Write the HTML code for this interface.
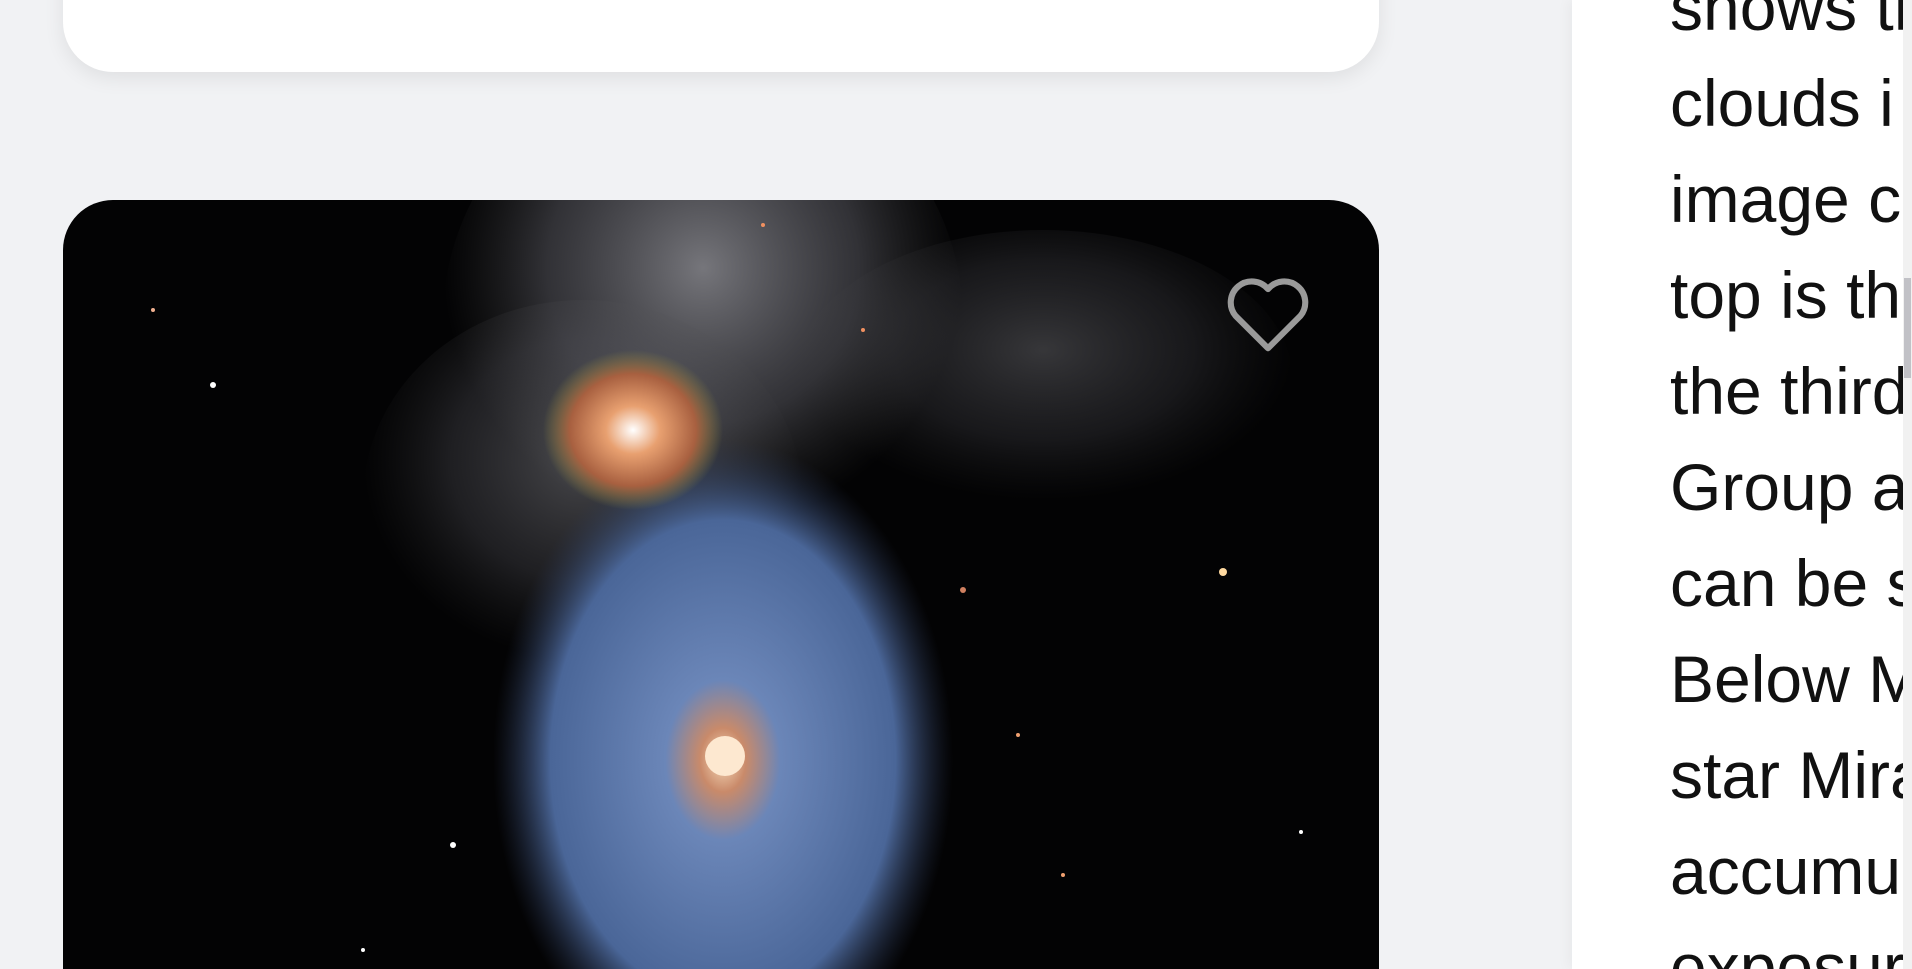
<!DOCTYPE html>
<html><head><style>
html,body{margin:0;width:1912px;height:969px;overflow:hidden}
body{background:#f1f2f4;position:relative;font-family:"Liberation Sans",sans-serif}
.card1{position:absolute;left:63px;top:-100px;width:1316px;height:172px;background:#fff;border-radius:0 0 50px 50px;box-shadow:0 6px 20px rgba(0,0,0,.08)}
.card2{position:absolute;left:63px;top:200px;width:1316px;height:769px;border-radius:50px 50px 0 0;overflow:hidden;background:#030304}
.panel{position:absolute;left:1572px;top:0;width:340px;height:969px;background:#fff;box-shadow:-4px 0 12px rgba(0,0,0,.04);overflow:hidden}
.txt{position:absolute;left:98px;top:-41px;width:233px;overflow:hidden;white-space:nowrap;font-size:66px;line-height:96px;color:#111}
.sb{position:absolute;left:1903px;top:0;width:9px;height:969px;background:#f1f1f1}
.th{position:absolute;left:1px;top:278px;width:7px;height:100px;background:#c1c1c6}
</style></head><body>
<div class="card1"></div>
<div class="card2">
<svg width="1316" height="769" viewBox="0 0 1316 769">
<defs>
<radialGradient id="haze" cx="50%" cy="40%" r="50%"><stop offset="0" stop-color="#8a8a90" stop-opacity=".85"/><stop offset=".6" stop-color="#606068" stop-opacity=".5"/><stop offset="1" stop-color="#444" stop-opacity="0"/></radialGradient>
<radialGradient id="gal" cx="50%" cy="50%" r="50%"><stop offset="0" stop-color="#f6d9b8"/><stop offset=".1" stop-color="#c98a6a"/><stop offset=".25" stop-color="#6b86b8"/><stop offset=".75" stop-color="#4a6698"/><stop offset="1" stop-color="#2a3550" stop-opacity="0"/></radialGradient>
<radialGradient id="core" cx="50%" cy="50%" r="50%"><stop offset="0" stop-color="#fff"/><stop offset=".3" stop-color="#e8a070"/><stop offset=".7" stop-color="#a86040"/><stop offset="1" stop-color="#884" stop-opacity="0"/></radialGradient>
</defs>
<ellipse cx="640" cy="120" rx="260" ry="260" fill="url(#haze)"/>
<ellipse cx="520" cy="300" rx="220" ry="200" fill="url(#haze)" opacity=".6"/>
<ellipse cx="980" cy="180" rx="250" ry="150" fill="url(#haze)" opacity=".45"/>
<ellipse cx="660" cy="560" rx="230" ry="320" fill="url(#gal)"/>
<ellipse cx="570" cy="230" rx="90" ry="80" fill="url(#core)"/>
<circle cx="662" cy="556" r="20" fill="#fde8d0"/>
<g fill="#fff"><circle cx="150" cy="185" r="3"/><circle cx="1160" cy="372" r="4" fill="#ffd9a0"/><circle cx="390" cy="645" r="3"/><circle cx="1238" cy="632" r="2"/><circle cx="300" cy="750" r="2"/><circle cx="90" cy="110" r="2" fill="#f0b090"/><circle cx="700" cy="25" r="2" fill="#f09060"/><circle cx="800" cy="130" r="2" fill="#f09060"/><circle cx="900" cy="390" r="3" fill="#d08060"/><circle cx="955" cy="535" r="2" fill="#f0a070"/><circle cx="1000" cy="675" r="2" fill="#f0a070"/></g>
</svg>
<svg style="position:absolute;left:1158px;top:70px" width="94" height="84" viewBox="0 0 24 22"><path d="M12 20.5 3.5 12A5 5 0 0 1 12 5a5 5 0 0 1 8.5 7z" fill="none" stroke="#9a9a9a" stroke-width="1.6" stroke-linejoin="round"/></svg>
</div>
<div class="panel"><div class="txt">shows th<br>clouds i<br>image c<br>top is th<br>the third<br>Group a<br>can be s<br>Below M<br>star Mira<br>accumu<br>exposur</div></div>
<div class="sb"><div class="th"></div></div>
</body></html>
